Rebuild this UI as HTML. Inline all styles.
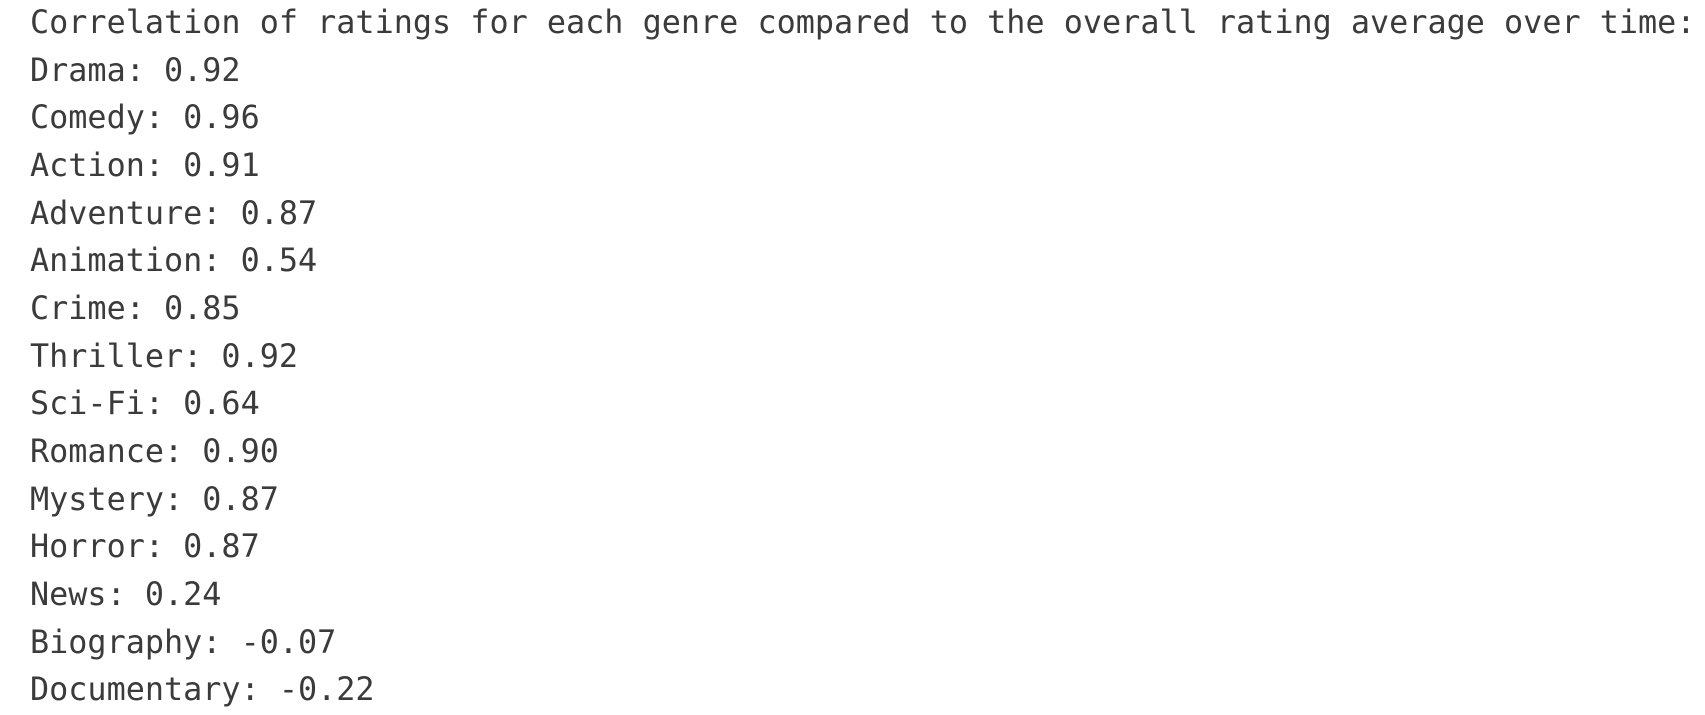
<!DOCTYPE html>
<html><head><meta charset="utf-8"><style>
html,body{margin:0;padding:0;background:#fff;width:1705px;height:715px;overflow:hidden}
pre{margin:0;padding:0 0 0 30px;position:relative;top:-1px;font-family:"DejaVu Sans Mono","Liberation Mono",monospace;font-size:31.8px;line-height:47.67px;color:#3b3b3b;white-space:pre}
</style></head><body><pre>Correlation of ratings for each genre compared to the overall rating average over time:
Drama: 0.92
Comedy: 0.96
Action: 0.91
Adventure: 0.87
Animation: 0.54
Crime: 0.85
Thriller: 0.92
Sci-Fi: 0.64
Romance: 0.90
Mystery: 0.87
Horror: 0.87
News: 0.24
Biography: -0.07
Documentary: -0.22</pre></body></html>
